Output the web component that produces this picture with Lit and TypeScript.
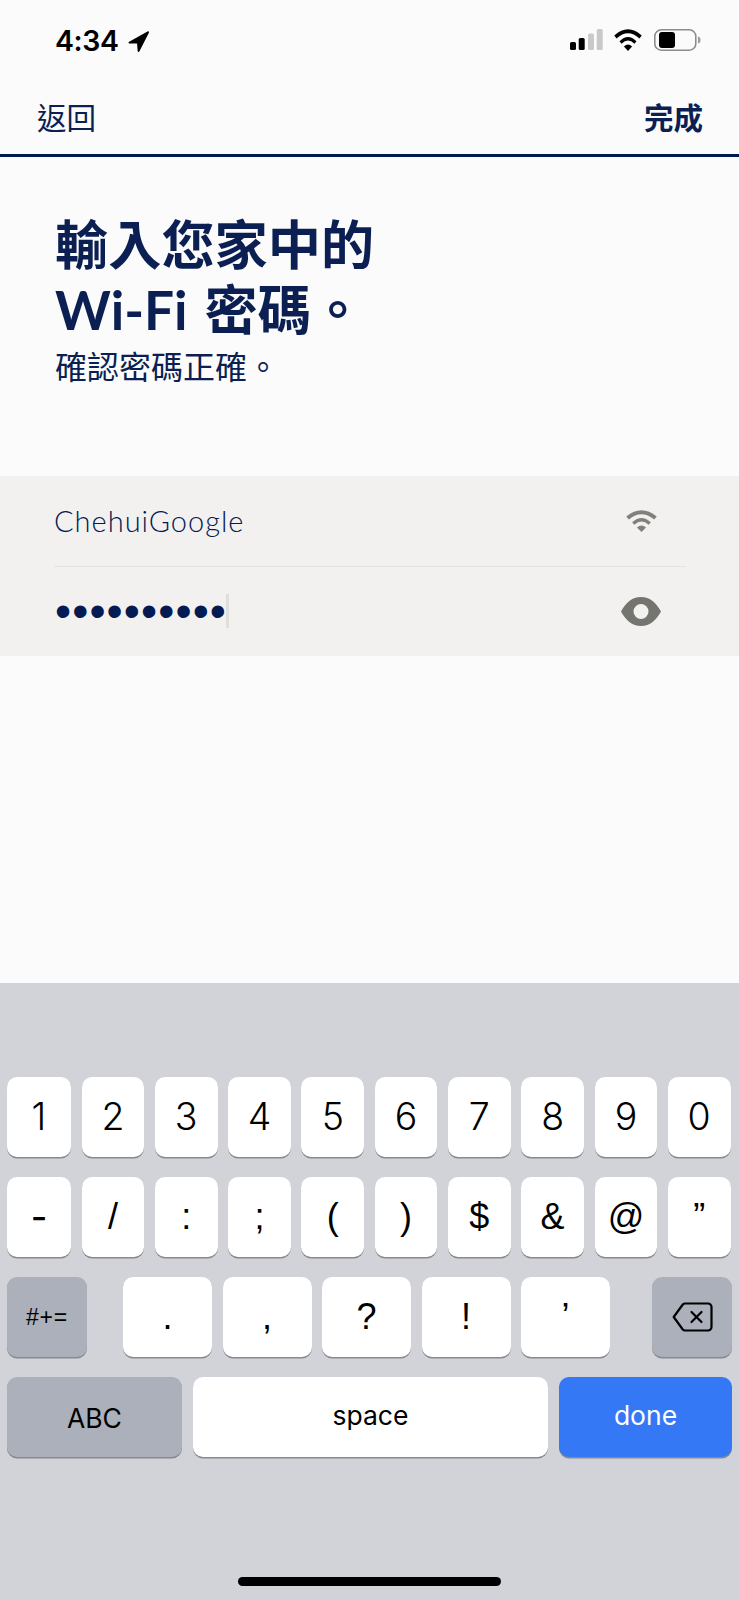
import { LitElement, html, css } from "lit";
import { customElement } from "lit/decorators.js";
import { classMap } from "lit/directives/class-map.js";

const row1 = ["1", "2", "3", "4", "5", "6", "7", "8", "9", "0"];
const row2 = ["-", "/", ":", ";", "(", ")", "$", "&", "@", "”"];
const row3 = [".", ",", "?", "!", "’"];

const wifi = (cls: string) => html`<svg class=${cls} viewBox="0 0 30 22" preserveAspectRatio="none">
  <path d="M15 22 10.600 17.400Q15 13.400 19.400 17.400Z" fill="currentColor"/>
  <path d="M7 13.500Q15 6 23 13.500" fill="none" stroke="currentColor" stroke-width="3.200"/>
  <path d="M1.500 8Q15-3.500 28.500 8" fill="none" stroke="currentColor" stroke-width="3.800"/>
</svg>`;

@customElement("app-root")
export class AppRoot extends LitElement {
  static styles = css`
    :host {
      display: flex;
      flex-direction: column;
      width: 739px;
      height: 1600px;
      background: #fbfbfb;
      color: #0b1f52;
      font-family: "Noto Sans CJK TC", sans-serif;
      overflow: hidden;
    }
    .status {
      height: 88px;
      box-sizing: border-box;
      padding: 26px 38px 0 55px;
      display: flex;
      justify-content: space-between;
      align-items: flex-start;
      color: #000;
    }
    .time {
      display: flex;
      align-items: center;
      gap: 9px;
      font: 600 28.5px/30px Inter, sans-serif;
      letter-spacing: -0.4px;
    }
    .arrow { width: 21px; height: 21px; }
    .status-icons { display: flex; align-items: center; padding-top: 3px; }
    .signal { width: 33px; height: 22px; margin-right: 11px; }
    .status-wifi { width: 28px; height: 22px; margin-right: 12px; }
    .battery { width: 47px; height: 22px; }
    .nav {
      height: 55px;
      padding: 0 36px 11px 37px;
      border-bottom: 3px solid #001a54;
      display: flex;
      justify-content: space-between;
      align-items: center;
      font-size: 29.5px;
      line-height: 40px;
    }
    .nav b { font-weight: 700; }
    .intro { padding: 52px 55px 0; height: 319px; box-sizing: border-box; }
    h1 { margin: 0; font-size: 53.2px; font-weight: 700; }
    h1 div { height: 65px; line-height: 65px; }
    h1 .latin { font-family: Lato, sans-serif; font-weight: 700; margin-right: 5px; }
    .sub { margin: 3px 0 0; font-size: 32px; line-height: 46px; font-weight: 400; }
    .panel {
      background: #f3f1ef;
      height: 180px;
      padding: 0 53px 0 54px;
      display: flex;
      flex-direction: column;
    }
    .field { flex: 1; display: flex; align-items: center; justify-content: space-between; }
    .field + .field { border-top: 1px solid #e6e4e1; }
    .ssid { font: 300 29px/40px Lato, sans-serif; letter-spacing: 1px; color: #041a52; }
    .net-wifi { width: 31px; height: 22px; color: #80807c; margin-right: 29px; }
    .eye { width: 40px; height: 29px; margin-right: 25px; }
    .pw { display: flex; align-items: center; }
    .dots {
      font: 400 46px/46px "Liberation Sans", sans-serif;
      letter-spacing: 1.1px;
      color: #041a52;
      margin-left: 1px;
    }
    .caret { width: 3px; height: 34px; background: #e0dfdc; margin-left: -1px; }
    .kbd {
      margin-top: auto;
      height: 617px;
      box-sizing: border-box;
      background: #d1d3d9;
      padding: 94px 7px 0 7px;
      display: flex;
      flex-direction: column;
      gap: 18.5px;
      color: #000;
      font-family: Inter, sans-serif;
    }
    .row { display: grid; column-gap: 10.6px; height: 81.5px; }
    .r-num { grid-template-columns: 64px repeat(9, 62.7px); }
    .r-sym { grid-template-columns: 80px 487px 1fr; column-gap: 36px; }
    .r-punct { display: grid; grid-template-columns: repeat(5, 1fr); column-gap: 10.5px; }
    .r-bottom { grid-template-columns: 175px 355px 173px; column-gap: 11px; }
    .key {
      background: #fff;
      border-radius: 10px;
      box-shadow: 0 1.5px 0 #898a8d;
      height: 80px;
      box-sizing: border-box;
      display: flex;
      align-items: center;
      justify-content: center;
      font: 400 36px/1 "Liberation Sans", sans-serif;
    }
    .key.digit { font: 350 37.5px/1 Inter, sans-serif; }
    .key.dash { font: 500 36px/1 Inter, sans-serif; }
    .key.word { font: 400 26.5px/1 Inter, sans-serif; padding-bottom: 3px; }
    .key.abc { padding: 3px 0 0; }
    .key.dark { background: #acb0ba; }
    .key.small { font: 400 23px/1 "Liberation Sans", sans-serif; letter-spacing: 0.8px; }
    .key.back { margin-left: 6px; }
    .key.done { background: #3478f6; color: #fff; }
    .del { width: 41px; height: 30px; }
    .home-wrap { flex: 1; display: flex; align-items: flex-end; justify-content: center; padding: 0 0 14px; }
    .home { width: 263px; height: 9px; border-radius: 5px; background: #000; }
  `;

  render() {
    return html`
      <div class="status">
        <div class="time">4:34
          <svg class="arrow" viewBox="0 0 22 22"><path d="M20.400.4 1.200 11.300c-1.100.7-.8 1.900.4 1.900l7.900-.2.600 7.900c.1 1.200 1.400 1.400 1.900.4L21.900 1.900C22.300.8 21.400-.1 20.400.4Z" fill="#000"/></svg>
        </div>
        <div class="status-icons">
          <svg class="signal" viewBox="0 0 33 22">
            <rect x="0" y="13" width="6" height="8" rx="1.600" fill="#000"/>
            <rect x="8.700" y="9" width="6" height="12" rx="1.600" fill="#000"/>
            <rect x="18" y="4.400" width="6" height="16.600" rx="1.600" fill="#c9c9c9"/>
            <rect x="26.700" y="0" width="6" height="21" rx="1.600" fill="#c9c9c9"/>
          </svg>
          ${wifi("status-wifi")}
          <svg class="battery" viewBox="0 0 47 22">
            <rect x=".8" y=".8" width="41" height="20.400" rx="6.500" fill="none" stroke="#8d8d8d" stroke-width="1.600"/>
            <rect x="5" y="3" width="16" height="16" rx="3" fill="#000"/>
            <path d="M44 7.500c2 .5 2.500 2 2.500 3.500s-.5 3-2.500 3.500Z" fill="#9a9a9a"/>
          </svg>
        </div>
      </div>
      <div class="nav"><span>返回</span><b>完成</b></div>
      <div class="intro">
        <h1>
          <div>輸入您家中的</div>
          <div><span class="latin">Wi-Fi</span> 密碼。</div>
        </h1>
        <p class="sub">確認密碼正確。</p>
      </div>
      <div class="panel">
        <div class="field">
          <span class="ssid">ChehuiGoogle</span>
          ${wifi("net-wifi")}
        </div>
        <div class="field">
          <div class="pw"><span class="dots">••••••••••</span><span class="caret"></span></div>
          <svg class="eye" viewBox="0 0 40 29">
            <path fill-rule="evenodd" fill="#75756f" d="M20 0C29 0 35.500 6 40 14.500 35.500 23 29 29 20 29S4.500 23 0 14.500C4.500 6 11 0 20 0ZM20 7a7.500 7.500 0 1 0 0 15 7.500 7.500 0 0 0 0-15Z"/>
          </svg>
        </div>
      </div>
      <div class="kbd">
        <div class="row r-num">${row1.map((k) => html`<div class="key digit">${k}</div>`)}</div>
        <div class="row r-num">${row2.map((k) => html`<div class=${classMap({ key: true, dash: k === "-" })}>${k}</div>`)}</div>
        <div class="row r-sym">
          <div class="key dark small">#+=</div>
          <div class="r-punct">${row3.map((k) => html`<div class="key">${k}</div>`)}</div>
          <div class="key dark back">
            <svg class="del" viewBox="0 0 41 30">
              <path d="M13 1.500H36a3.500 3.500 0 0 1 3.500 3.500V25a3.500 3.500 0 0 1-3.500 3.500H13a3 3 0 0 1-2.200-1L1.700 15 10.800 2.500a3 3 0 0 1 2.200-1Z" fill="none" stroke="#000" stroke-width="2.200" stroke-linejoin="round"/>
              <path d="M19.500 10 29.500 20M29.500 10 19.500 20" stroke="#000" stroke-width="2.200" stroke-linecap="round"/>
            </svg>
          </div>
        </div>
        <div class="row r-bottom">
          <div class="key dark word abc">ABC</div>
          <div class="key word">space</div>
          <div class="key done word">done</div>
        </div>
        <div class="home-wrap"><div class="home"></div></div>
      </div>
    `;
  }
}
